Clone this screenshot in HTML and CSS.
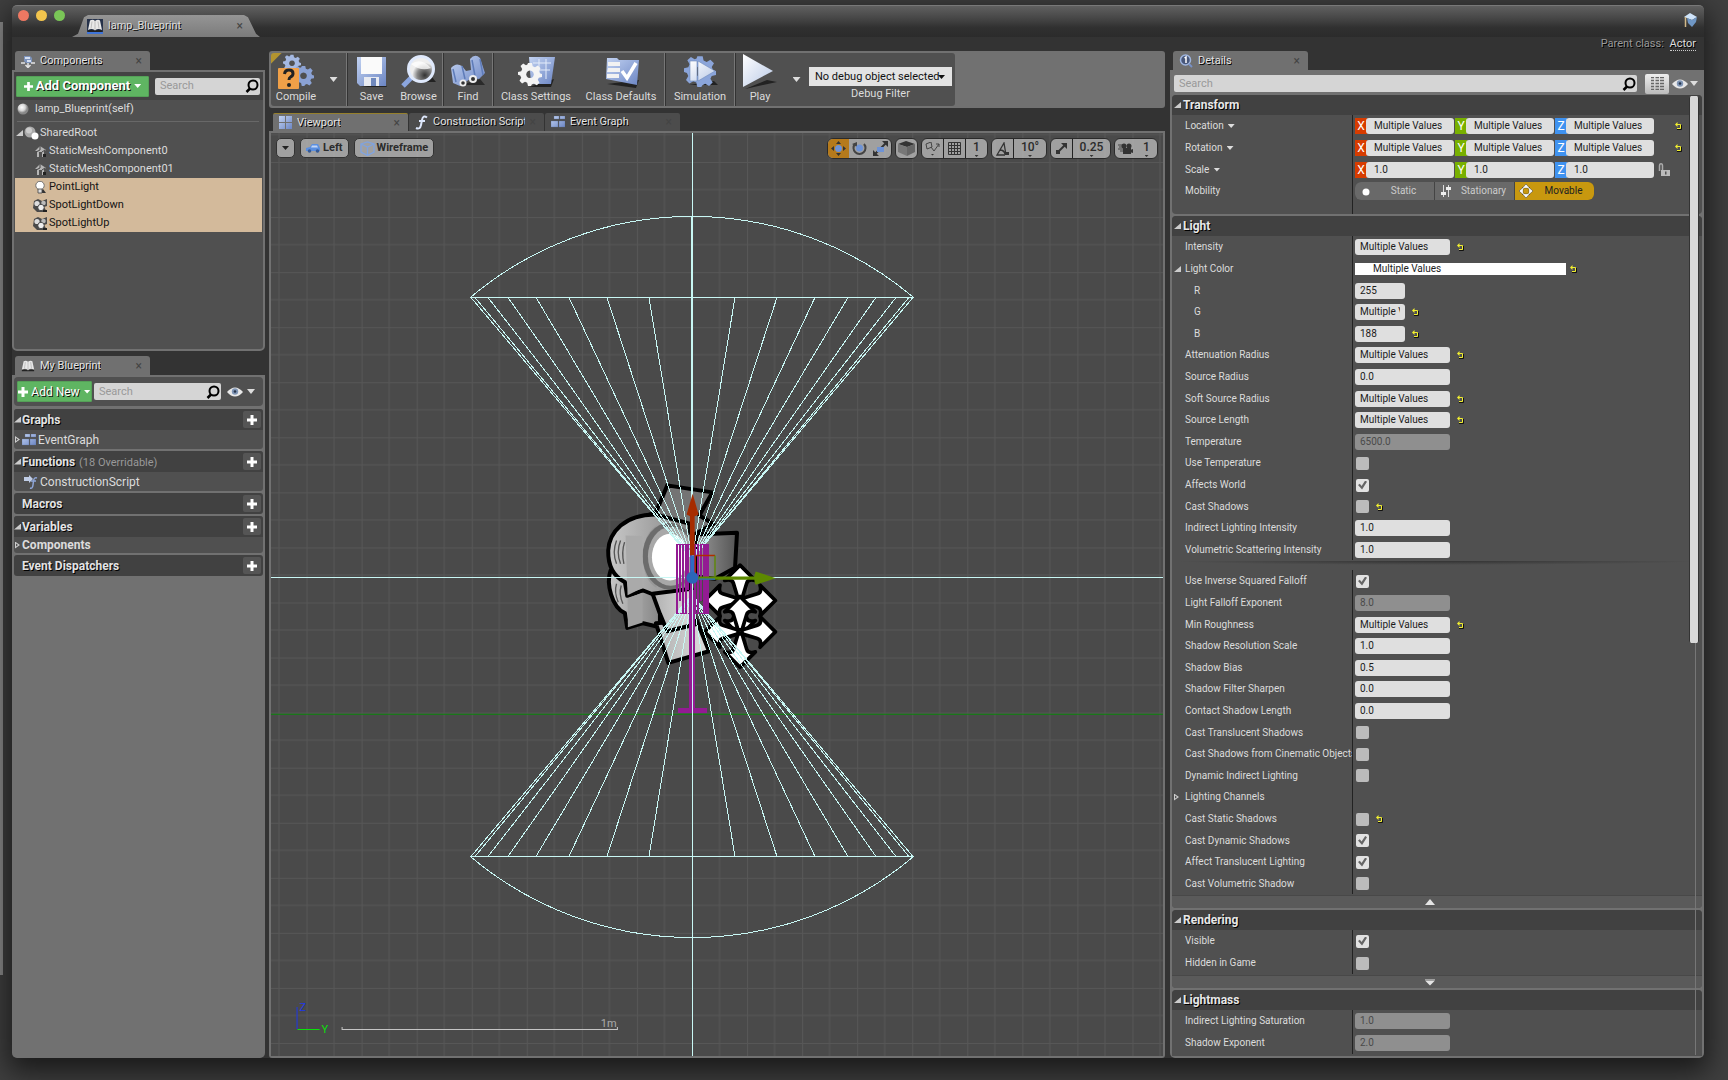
FILE: index.html
```html
<!DOCTYPE html>
<html lang="en">
<head>
<meta charset="utf-8">
<title>lamp_Blueprint</title>
<link rel="stylesheet" href="styles.css">
</head>
<body>
<svg class="defs" width="0" height="0" aria-hidden="true">
  <defs>
    <linearGradient id="blue" x1="0" y1="0" x2="1" y2="1"><stop offset="0" stop-color="#c3d3f2"/><stop offset="1" stop-color="#6c86c4"/></linearGradient>
    <linearGradient id="pale" x1="0" y1="0" x2="1" y2="1"><stop offset="0" stop-color="#fff"/><stop offset="1" stop-color="#b9c9e6"/></linearGradient>
    <radialGradient id="ball" cx=".4" cy=".35"><stop offset="0" stop-color="#fff"/><stop offset=".6" stop-color="#d8d8d8"/><stop offset="1" stop-color="#888"/></radialGradient>
    <radialGradient id="lens" cx=".65" cy=".75"><stop offset="0" stop-color="#333"/><stop offset=".6" stop-color="#888"/><stop offset="1" stop-color="#eee"/></radialGradient>
    <symbol id="i-search" viewBox="0 0 14 14"><circle cx="8" cy="6" r="4.5" fill="none" stroke="#000" stroke-width="2"/><path d="M5 9.500L1.500 13" stroke="#000" stroke-width="2.500"/></symbol>
    <symbol id="i-plus" viewBox="0 0 10 10"><path d="M5 0v10M0 5h10" stroke="#fff" stroke-width="3"/></symbol>
    <symbol id="i-eye" viewBox="0 0 16 10"><path d="M0 5Q8 -4 16 5Q8 14 0 5Z" fill="#e8e8e8"/><circle cx="8" cy="4.500" r="3.200" fill="#7f95b5"/><circle cx="8" cy="4.500" r="1.300" fill="#27364d"/></symbol>
    <symbol id="i-book" viewBox="0 0 16 14"><path d="M1 11L3 1.500Q6 0 8 2Q11 0 13 1.500L15 11Q11 9 8 11.500Q5 9 1 11Z" fill="#e8e8e8"/><path d="M8 2v9M5 2.500l-1 7M11 2.500l1 7" stroke="#aaa" stroke-width=".7"/><path d="M1 11.500Q5 10 8 12Q11 10 15 11.500V13H1Z" fill="#222"/></symbol>
    <symbol id="i-comp" viewBox="0 0 14 14"><path d="M3 2h6l2 2v5H5L3 7Z" fill="#7d93bb"/><path d="M4 3h5v2H4zM6 6h4v2H6z" fill="#d5dff0"/><path d="M0 9h4M10 9h4M7 9v4M4.500 11L7 13.500L9.500 11" stroke="#e4e4e4" stroke-width="1.500" fill="none"/></symbol>
    <symbol id="i-reset" viewBox="0 0 7 8"><path d="M2 7.500h4.500V3" stroke="#111" fill="none"/><path d="M2 6.500h3.500v-4H1" stroke="#f2f02e" fill="none"/><path d="M0 2.500L2.500 0v5Z" fill="#f2f02e"/></symbol>
    <symbol id="i-mesh" viewBox="0 0 13 13"><path d="M1 6L6 1L12 5L10 6V12H8V7H5V12H3V6Z" fill="#b5b5b5"/><path d="M6 1V5L2 7M8 7l3-2" stroke="#444" fill="none"/><path d="M9 9h3v3H9z" fill="#222"/></symbol>
    <symbol id="i-bulb" viewBox="0 0 13 13"><path d="M6 12h6L9 8Z" fill="#333"/><circle cx="6" cy="4.500" r="4.200" fill="#fff" stroke="#555" stroke-width=".8"/><path d="M4 8h4v4H4z" fill="#ddd" stroke="#444" stroke-width=".8"/></symbol>
    <symbol id="i-spot" viewBox="0 0 15 13"><path d="M1 2L5 0L9 2L14 0V7L11 8L14 13H4L0 9Z" fill="#4a4a4a"/><circle cx="4" cy="4.500" r="2.600" fill="#ddd"/><circle cx="10.500" cy="4" r="2.300" fill="#bbb"/><circle cx="8" cy="8.500" r="3.200" fill="#eee" stroke="#333" stroke-width=".8"/><path d="M10 11h4v2h-4z" fill="#222"/></symbol>
    <symbol id="i-gear" viewBox="0 0 24 24"><path d="M10 1h4l.7 3.200 2.300 1L19.800 3.500l2.700 2.700L20.800 9l1 2.300L24 12v3l-3.200.7-1 2.100 1.700 2.900-2.700 2.600-2.900-1.700-2.100 1L13 24h-3l-.8-3.300-2.200-1-2.900 1.700-2.600-2.700 1.700-2.900-1-2.300L0 12.700V10l3.200-.8 1-2.300L2.500 4 5.200 1.500 8 3.200l1.400-.6Z M12 8.500a3.800 3.800 0 1 0 .01 0Z" fill-rule="evenodd"/></symbol>
    <symbol id="i-blocks" viewBox="0 0 14 12"><path d="M3 0h5v3H3zM9 0h5v3H9zM0 5h7v6H0zM8 5h6v6H8z" fill="url(#blue)" stroke="#5b6f99" stroke-width=".3"/></symbol>
  </defs>
</svg>

<div class="window">
  <header class="titlebar">
    <div class="lights"><i class="red"></i><i class="yellow"></i><i class="green"></i></div>
    <div class="doc-tab">
      <svg width="16" height="15" viewBox="0 0 16 15"><path d="M0 0h16v13H0z" fill="#26324a"/><use href="#i-book" width="16" height="14"/><path d="M0 13h16v2H0z" fill="#3f74d8"/></svg><span>lamp_Blueprint</span><button class="x" aria-label="Close">×</button>
    </div>
    <svg class="tutorial" width="13" height="15" viewBox="0 0 13 15"><path d="M0 4L6 0L13 4L8 7Z" fill="#cfe4fa"/><path d="M3 5L8 7L13 4L12 9L8 14L4 10Z" fill="#6f96c4"/><path d="M1.500 4v10" stroke="#d2b98a" stroke-width="1.500"/></svg>
  </header>
  <div class="parent">Parent class: <a href="#">Actor</a></div>

  <div class="columns">
    <aside class="left">
      <div class="ptab"><svg width="14" height="14"><use href="#i-comp"/></svg><span>Components</span><button class="x" aria-label="Close">×</button></div>
      <section class="panel components">
        <div class="bar">
          <button class="add big"><svg width="9" height="9"><use href="#i-plus"/></svg>Add Component<i class="down"></i></button>
          <div class="search"><input type="text" placeholder="Search" aria-label="Search components"><svg width="14" height="14"><use href="#i-search"/></svg></div>
        </div>
        <div class="self"><svg width="12" height="12" viewBox="0 0 12 12"><circle cx="6" cy="6" r="5.500" fill="url(#ball)"/></svg>lamp_Blueprint(self)</div>
        <ul class="tree">
          <li class="root"><i class="open"></i><svg width="15" height="14" viewBox="0 0 15 14"><circle cx="6" cy="6" r="5.500" fill="#aaa"/><circle cx="5" cy="4.500" r="3" fill="#ccc"/><circle cx="11" cy="10" r="3.500" fill="#fff"/></svg>SharedRoot</li>
          <li><svg width="13" height="13"><use href="#i-mesh"/></svg>StaticMeshComponent0</li>
          <li><svg width="13" height="13"><use href="#i-mesh"/></svg>StaticMeshComponent01</li>
          <li class="sel"><svg width="13" height="13"><use href="#i-bulb"/></svg>PointLight</li>
          <li class="sel"><svg width="15" height="13"><use href="#i-spot"/></svg>SpotLightDown</li>
          <li class="sel"><svg width="15" height="13"><use href="#i-spot"/></svg>SpotLightUp</li>
        </ul>
      </section>

      <div class="ptab second"><svg width="14" height="14"><use href="#i-book"/></svg><span>My Blueprint</span><button class="x" aria-label="Close">×</button></div>
      <section class="panel blueprint">
        <div class="bar">
          <button class="add"><svg width="10" height="10"><use href="#i-plus"/></svg>Add New<i class="down"></i></button>
          <div class="search"><input type="text" placeholder="Search" aria-label="Search blueprint"><svg width="14" height="14"><use href="#i-search"/></svg></div>
          <button class="view" aria-label="View options"><svg width="16" height="10"><use href="#i-eye"/></svg><i class="down"></i></button>
        </div>
        <div class="cat">
          <h3><i class="open"></i>Graphs<button aria-label="Add graph"><svg width="10" height="10"><use href="#i-plus"/></svg></button></h3>
          <div class="item"><i class="shut"></i><svg width="14" height="12"><use href="#i-blocks"/></svg>EventGraph</div>
        </div>
        <div class="cat">
          <h3><i class="open"></i>Functions <small>(18 Overridable)</small><button aria-label="Add function"><svg width="10" height="10"><use href="#i-plus"/></svg></button></h3>
          <div class="item"><i class="none"></i><svg width="14" height="14" viewBox="0 0 14 14"><path d="M0 2h5V0l4 4-4 4V6H0Z" fill="#c0cde6"/><path d="M13 3q-3-1-3.500 3L9 10q-.5 4-3 3M7 6h5" stroke="#8ea5d6" stroke-width="1.500" fill="none"/></svg>ConstructionScript</div>
        </div>
        <div class="cat"><h3><i class="none"></i>Macros<button aria-label="Add macro"><svg width="10" height="10"><use href="#i-plus"/></svg></button></h3></div>
        <div class="cat">
          <h3><i class="open"></i>Variables<button aria-label="Add variable"><svg width="10" height="10"><use href="#i-plus"/></svg></button></h3>
          <div class="item sub"><i class="shut"></i>Components</div>
        </div>
        <div class="cat"><h3><i class="none"></i>Event Dispatchers<button aria-label="Add dispatcher"><svg width="10" height="10"><use href="#i-plus"/></svg></button></h3></div>
      </section>
    </aside>

    <main class="center">
      <div class="toolbar">
        <div class="tools">
          <button class="tool compile"><svg width="38" height="36" viewBox="0 0 38 36"><use href="#i-gear" x="6" y="0" width="18" height="18" fill="#a5b9e2"/><use href="#i-gear" x="16" y="11" width="21" height="21" fill="#8ba2d4"/><rect x="1" y="14" width="21" height="21" rx="1" fill="#f0a048"/><path d="M7.500 20q.5-4 4.500-4t4 3.500q0 2.500-2.500 3.500-1.500.8-1.500 3" stroke="#222" stroke-width="3" fill="none"/><circle cx="12" cy="31" r="2" fill="#222"/></svg>Compile</button>
          <button class="caret" aria-label="Compile options"><i class="down"></i></button>
          <i class="sep"></i>
          <button class="tool w47"><svg width="36" height="36" viewBox="0 0 36 36"><path d="M6 33h27l-2-3z" fill="#222"/><path d="M3 3h29v29H6l-3-3Z" fill="url(#blue)"/><path d="M7 3h21v17H7z" fill="#fafafa"/><path d="M10 23h15v9H10z" fill="#e8ebf2"/><path d="M17 24h5v8h-5z" fill="#7089bd"/></svg>Save</button>
          <button class="tool w47"><svg width="38" height="36" viewBox="0 0 38 36"><path d="M14 28h22l-4-5z" fill="#222"/><path d="M12 23L3 32" stroke="#8ba6df" stroke-width="5"/><circle cx="21" cy="15" r="12.500" fill="url(#lens)" stroke="#dfe9fc" stroke-width="3"/><path d="M11 10q10-7 20 4-10 4-20-4Z" fill="#fff" opacity=".75"/></svg>Browse</button>
          <i class="sep"></i>
          <button class="tool w48"><svg width="38" height="36" viewBox="0 0 38 36"><path d="M12 31h24l-5-6z" fill="#2a2a2a"/><path d="M2 14q5-6 11-2l4 5 5-1-1-11q5-6 10-1l5 15-6 6-7-1-5 3-7 5-7-3Z" fill="url(#blue)"/><path d="M4 15l3 13M13 12l3 13M23 6l3 16M31 5l3 16" stroke="#5e7bb8" stroke-width="1.500"/><circle cx="14" cy="29" r="3.500" fill="#eee"/><circle cx="24" cy="25" r="4" fill="#eee"/><circle cx="14" cy="29" r="1.800" fill="#333"/><circle cx="24" cy="25" r="2" fill="#333"/></svg>Find</button>
          <i class="sep"></i>
          <button class="tool w84"><svg width="38" height="36" viewBox="0 0 38 36"><path d="M12 33h22l3-8z" fill="#222"/><path d="M12 3h26l-4 27H14Z" fill="url(#blue)"/><path d="M16 9h18M15 16h18M22 5v15M29 5v20" stroke="#e4ecfa"/><use href="#i-gear" x="1" y="8" width="24" height="24" fill="#f4f4f4"/></svg>Class Settings</button>
          <button class="tool w86"><svg width="38" height="36" viewBox="0 0 38 36"><path d="M5 30l29 4 3-8z" fill="#222"/><path d="M5 4h10l2 2h20l-2 25L4 25Z" fill="url(#blue)"/><path d="M6 8h12v4H6zM6 14h12v4H5zM5 20h12v4H5z" fill="#f2f2f2"/><path d="M20 17l5 7L34 9" stroke="#fff" stroke-width="3.500" fill="none"/></svg>Class Defaults</button>
          <i class="sep"></i>
          <button class="tool w68"><svg width="38" height="36" viewBox="0 0 38 36"><path d="M8 31h29l-4-4z" fill="#222"/><use href="#i-gear" x="3" y="1" width="32" height="32" fill="#8ba5da"/><path d="M9 7h7v20H9zM17 7l17 10-17 10Z" fill="url(#pale)" stroke="#6f89bb" stroke-width=".6"/></svg>Simulation</button>
          <i class="sep"></i>
          <button class="tool w48"><svg width="38" height="36" viewBox="0 0 38 36"><path d="M4 35L36 28l-10-2z" fill="#222"/><path d="M2 0L32 17L2 33Z" fill="url(#pale)"/></svg>Play</button>
          <button class="caret" aria-label="Play options"><i class="down"></i></button>
          <div class="debug"><select aria-label="Debug Filter"><option>No debug object selected</option></select><i class="down"></i><span>Debug Filter</span></div>
        </div>
      </div>
      <nav class="tabs">
        <div class="ptab active"><svg width="13" height="13" viewBox="0 0 13 13"><path d="M0 0h6v6H0zM7 0h6v6H7zM0 7h6v6H0zM7 7h6v6H7z" fill="url(#blue)"/></svg><span>Viewport</span><button class="x" aria-label="Close">×</button></div>
        <div class="ptab"><svg width="13" height="15" viewBox="0 0 13 15"><path d="M12 2.500Q8-.5 7 5L6 10Q5 15 1 13M4 6h6" stroke="#dce6fa" stroke-width="2" fill="none"/></svg><span>Construction Script</span><button class="x" aria-label="Close">×</button></div>
        <div class="ptab"><svg width="14" height="12"><use href="#i-blocks"/></svg><span>Event Graph</span><button class="x" aria-label="Close">×</button></div>
      </nav>
      <section class="viewport">
        <svg class="scene" viewBox="271 133 892 922" preserveAspectRatio="xMidYMid slice">
          <defs>
            <pattern id="grid" x="692" y="217" width="55" height="55" patternUnits="userSpaceOnUse"><path d="M.5 0V55M27.500 0V55M0 .5H55M0 27.500H55" stroke="#575757"/></pattern>
            <linearGradient id="metal"><stop offset="0" stop-color="#c8c8c8"/><stop offset="1" stop-color="#858585"/></linearGradient>
            <linearGradient id="dark"><stop offset="0" stop-color="#989898"/><stop offset="1" stop-color="#545454"/></linearGradient>
            <linearGradient id="flap"><stop offset="0" stop-color="#b0b0b0"/><stop offset="1" stop-color="#dedede"/></linearGradient>
            <g id="fan"><path d="M0 0L-221-262M0 0L-217-262M0 0L-204-262M0 0L-184-262M0 0L-156-262M0 0L-123-262M0 0L-85-262M0 0L-43-262M0 0L43-262M0 0L85-262M0 0L123-262M0 0L156-262M0 0L184-262M0 0L204-262M0 0L217-262M0 0L221-262M-221-262H221M-221-262A343 343 0 0 1 221-262" fill="none" stroke="#c8f7f4"/></g>
            <path id="head" d="M0-106L46-60Q24-66 20-52L6-6H-6L-20-52Q-24-66-46-60Z"/>
            <g id="move"><use href="#head"/><use href="#head" transform="rotate(90)"/><use href="#head" transform="rotate(180)"/><use href="#head" transform="rotate(270)"/></g>
          </defs>
          <rect x="-500" y="-500" width="3000" height="3000" fill="#4a4a4a"/>
          <rect x="-500" y="-500" width="3000" height="3000" fill="url(#grid)"/>
          <path d="M-500 713.500H2500" stroke="#0b860b"/>
          <svg x="590" y="470" width="200" height="250" viewBox="0 0 600 750">
            <g stroke="#000" stroke-width="12" stroke-linejoin="round">
              <path d="M62 300C48 340 66 410 105 428L112 472L160 458L210 470V340Z" fill="url(#metal)"/>
              <path d="M198 458L320 450L357 542L235 577Z" fill="url(#flap)"/>
              <path d="M232 45L367 66L328 135L370 160L300 200L185 165L172 135L198 126Z" fill="#747474"/>
              <path d="M318 192L441 187L435 292L375 325L318 318Z" fill="url(#dark)"/>
              <path d="M195 132C105 132 58 185 55 240C54 285 72 318 105 335L112 376L160 360L190 372H300V160Z" fill="url(#metal)"/>
              <path d="M188 370L210 430L232 482L315 462L305 355Z" fill="url(#flap)"/>
            </g>
            <path d="M200 165Q160 190 160 260T200 352Z" fill="#999"/>
            <ellipse cx="238" cy="257" rx="80" ry="100" fill="#6c6c6c"/>
            <ellipse cx="242" cy="258" rx="68" ry="88" fill="#a8a8a8"/>
            <ellipse cx="240" cy="260" rx="54" ry="70" fill="#fff"/>
            <path d="M107 195L158 197V352L113 374Z" fill="#aaa"/><path d="M113 384L158 366V456L114 470Z" fill="#a2a2a2"/>
            <path d="M80 210q-14 35 0 70M92 210q-14 35 0 70M104 215q-10 30-2 65M80 340q-8 25 5 55M94 345q-8 25 5 55" fill="none" stroke="#555" stroke-width="4"/>
            <g fill="#fff" stroke="#000" stroke-width="11" stroke-linejoin="round"><use href="#move" x="450" y="390"/><use href="#move" x="450" y="484"/></g>
          </svg>
          <g shape-rendering="crispEdges">
            <path d="M-500 577.500H2500" stroke="#c8f7f4"/>
            <use href="#fan" x="692" y="559"/>
            <use href="#fan" transform="translate(692 594) scale(1 -1)"/>
            <path d="M692 217V500" stroke="#c8f7f4" stroke-width="2"/>
            <path d="M677 544V613M680 544V600M683 544V613M686 544V613M688 544V590M691 544V613M695 544V613M698 544V613M701 544V600M704 544V613M706 544V613M708 544V613" stroke="#931b93" stroke-width="2"/>
            <path d="M676 544.500H709M676 612.500H709" stroke="#931b93" stroke-dasharray="3 1"/>
            <path d="M692 590V710" stroke="#931b93" stroke-width="6"/>
            <path d="M678 709.500H707" stroke="#931b93" stroke-width="5"/>
            <path d="M692.500-500V2500" stroke="#c8f7f4"/>
          </g>
          <svg x="590" y="470" width="200" height="250" viewBox="0 0 600 750">
            <path d="M318 255H375" stroke="#b02c00" stroke-width="4"/><path d="M375 255V320" stroke="#5d8a00" stroke-width="4"/>
            <path d="M307 130V255" stroke="#a62c00" stroke-width="14"/><path d="M307 255V310" stroke="#2d6cc4" stroke-width="12"/><path d="M316 255V310" stroke="#a62c00" stroke-width="4"/>
            <path d="M308 70L326 132Q308 144 290 132Z" fill="#a62c00"/>
            <path d="M320 323H500" stroke="#5d8a00" stroke-width="10"/><path d="M326 326H375" stroke="#2d6cc4" stroke-width="4"/>
            <path d="M557 323L497 303Q488 323 497 343Z" fill="#5d8a00"/><circle cx="307" cy="322" r="18" fill="#2b67b8"/>
          </svg>
          <path d="M297.500 1006V1028" stroke="#1e37e8"/><path d="M298 1028.500H320" stroke="#0be00b"/>
          <text x="300" y="1010" class="mono" fill="#1e37e8">Z</text><text x="322" y="1032" class="mono" fill="#0be00b">Y</text>
          <path d="M342.500 1026V1028.500H617.500V1026" stroke="#c4c4c4" fill="none"/><text x="601" y="1026" class="mono" fill="#aaa">1m</text>
        </svg>
        <div class="vtools">
          <button class="pill sq" aria-label="Viewport options"><i class="down dark"></i></button>
          <button class="pill"><svg width="15" height="9" viewBox="0 0 15 9"><path d="M0 4L4 3L6 0H12L14 4V7H0Z" fill="#5b8fe0"/><circle cx="3.500" cy="7" r="1.800" fill="#355a96"/><circle cx="11.500" cy="7" r="1.800" fill="#355a96"/><path d="M6 1.500h5l1 2H5z" fill="#c2d6f7"/></svg>Left</button>
          <button class="pill"><svg width="15" height="15" viewBox="0 0 15 15"><path d="M1 3L7.500 1L14 3V11L7.500 14.500L1 11ZM1 3L7.500 6L14 3M7.500 6V14" fill="none" stroke="#7fa3e0" stroke-width="1.300"/></svg>Wireframe</button>
          <div class="seg first">
            <button class="on" aria-label="Move"><svg width="15" height="15" viewBox="0 0 15 15"><path d="M7.500 0L10 3H5ZM7.500 15L10 12H5ZM0 7.500L3 5v5ZM15 7.500L12 5v5Z" fill="#333"/><circle cx="7.500" cy="7.500" r="3.500" fill="#6e93d6"/></svg></button>
            <button aria-label="Rotate"><svg width="15" height="15" viewBox="0 0 15 15"><path d="M3 3A6 6 0 1 0 12 3" fill="none" stroke="#444" stroke-width="2"/><path d="M0 3l5-2v5z" fill="#444"/><circle cx="7.500" cy="7" r="3.500" fill="#6e93d6"/></svg></button>
            <button aria-label="Scale"><svg width="15" height="15" viewBox="0 0 15 15"><path d="M2 13L13 2" stroke="#333" stroke-width="2"/><path d="M15 0V6L9 0ZM0 15V9L6 15Z" fill="#333"/><path d="M4 6h7v5H4z" fill="#6e93d6"/></svg></button>
          </div>
          <div class="seg"><button aria-label="Coordinate space"><svg width="17" height="15" viewBox="0 0 17 15"><path d="M0 3L8 0L17 3L9 6Z" fill="#333"/><path d="M0 3L9 6V15L0 11Z" fill="#777"/><path d="M17 3V11L9 15V6Z" fill="#666"/></svg></button></div>
          <div class="seg"><button class="stack" aria-label="Surface snap"><svg width="15" height="11" viewBox="0 0 15 11"><path d="M1 2L6 0L7 5L2 7ZM6 5L9 9L14 2M11 2h3v3" fill="none" stroke="#444"/></svg><i></i></button><button class="line" aria-label="Grid snap"><svg width="13" height="13" viewBox="0 0 13 13"><path d="M.5.5h12v12H.5zM3.500 0v13M6.500 0v13M9.500 0v13M0 3.500h13M0 6.500h13M0 9.500h13" fill="none" stroke="#333"/></svg></button><button class="line stack">1<i></i></button></div>
          <div class="seg"><button aria-label="Angle snap"><svg width="13" height="14" viewBox="0 0 13 14"><path d="M9 13H1L8 1L10 13M4 8q4 0 5 4" fill="none" stroke="#333" stroke-width="1.300"/><path d="M9 10h4v3H9z" fill="#333"/></svg></button><button class="line stack w33">10°<i></i></button></div>
          <div class="seg"><button aria-label="Scale snap"><svg width="11" height="11" viewBox="0 0 11 11"><path d="M3 8L9 2" stroke="#333" stroke-width="2"/><path d="M11 0V6L5 0ZM0 7h4v4H0z" fill="#333"/></svg></button><button class="line stack w38">0.25<i></i></button></div>
          <div class="seg cam"><button aria-label="Camera speed"><svg width="15" height="12" viewBox="0 0 15 12"><path d="M0 2h6M1 4h5M0 6h6M2 8h5" stroke="#444"/><circle cx="6" cy="3" r="2.500" fill="#333"/><circle cx="11" cy="3" r="2.500" fill="#333"/><path d="M5 5h8v6H5zM12 7l3-1v4l-3-1z" fill="#333"/></svg></button><button class="stack">1<i></i></button></div>
        </div>
      </section>
    </main>

    <aside class="right">
      <div class="ptab"><svg width="14" height="14" viewBox="0 0 14 14"><circle cx="6.500" cy="6" r="5" fill="#48577a" stroke="#9fb5de" stroke-width="1.500"/><path d="M5.500 4L7 3v6" stroke="#fff" stroke-width="1.500" fill="none"/><path d="M10 10l3 3" stroke="#7891c6" stroke-width="2"/></svg><span>Details</span><button class="x" aria-label="Close">×</button></div>
      <section class="panel details">
        <div class="find">
          <div class="search"><input type="text" placeholder="Search" aria-label="Search details"><svg width="14" height="14"><use href="#i-search"/></svg></div>
          <button class="matrix" aria-label="Property matrix"><svg width="13" height="13" viewBox="0 0 13 13"><path d="M0 .5h13M0 3.500h13M0 6.500h13M0 9.500h13M0 12.500h13" stroke="#666" stroke-width="1.500" stroke-dasharray="3 1.500 3.500 1 4"/></svg></button>
          <button class="view" aria-label="View options"><svg width="16" height="10"><use href="#i-eye"/></svg><i class="down"></i></button>
        </div>
        <div class="scroll">
          <div class="sec">
            <h2><i class="open"></i>Transform</h2>
            <div class="rows transform">
              <div class="row"><label for="lx"><i class="slot"></i>Location<i class="down"></i></label><div class="vec"><span class="r">X</span><input id="lx" value="Multiple Values"><span class="g">Y</span><input aria-label="Location Y" value="Multiple Values"><span class="b">Z</span><input aria-label="Location Z" value="Multiple Values"><svg class="far" width="7" height="8"><use href="#i-reset"/></svg></div></div>
              <div class="row"><label for="rx"><i class="slot"></i>Rotation<i class="down"></i></label><div class="vec"><span class="r">X</span><input id="rx" value="Multiple Values"><span class="g">Y</span><input aria-label="Rotation Y" value="Multiple Values"><span class="b">Z</span><input aria-label="Rotation Z" value="Multiple Values"><svg class="far" width="7" height="8"><use href="#i-reset"/></svg></div></div>
              <div class="row"><label for="sx"><i class="slot"></i>Scale<i class="down"></i></label><div class="vec"><span class="r">X</span><input id="sx" value="1.0"><span class="g">Y</span><input aria-label="Scale Y" value="1.0"><span class="b">Z</span><input aria-label="Scale Z" value="1.0"><svg class="lock" width="12" height="14" viewBox="0 0 12 14"><path d="M1.500 8V3Q1.500.800 3 .800T4.500 3V7" fill="none" stroke="#aaa" stroke-width="1.500"/><path d="M3 7h9v6H3z" fill="#bbb"/><path d="M7 8.500h1.500v3H7z" fill="#555"/></svg></div></div>
              <div class="row"><span class="lab"><i class="slot"></i>Mobility</span><div class="mob"><button><svg width="14" height="14" viewBox="0 0 14 14"><circle cx="7" cy="8" r="3.500" fill="#fff"/></svg><span>Static</span></button><button><svg width="14" height="14" viewBox="0 0 14 14"><path d="M4.500 1v12M9.500 1v12" stroke="#ddd"/><path d="M2 8h5v3H2zM7 3h5v3H7z" fill="#eee"/></svg><span>Stationary</span></button><button class="on"><svg width="14" height="14" viewBox="0 0 14 14"><path d="M7 0l3.500 4h-7zM7 14l3.500-4h-7zM0 7l4-3.500v7zM14 7l-4-3.500v7z" fill="#fff" stroke="#333" stroke-width=".5"/><circle cx="7" cy="7" r="4" fill="none" stroke="#eee"/></svg><span>Movable</span></button></div></div>
            </div>
          </div>
          <div class="sec">
            <h2><i class="open"></i>Light</h2>
            <div class="rows">
              <div class="row"><label for="p1"><i class="slot"></i>Intensity</label><div class="val"><input id="p1" value="Multiple Values"><svg width="7" height="8"><use href="#i-reset"/></svg></div></div>
              <div class="row"><label for="p2"><i class="slot"><i class="open"></i></i>Light Color</label><div class="val color"><button id="p2">Multiple Values</button><svg width="7" height="8"><use href="#i-reset"/></svg></div></div>
              <div class="row child"><label for="p3"><i class="slot"></i>R</label><div class="val short"><input id="p3" value="255"></div></div>
              <div class="row child"><label for="p4"><i class="slot"></i>G</label><div class="val short"><input id="p4" value="Multiple Values"><svg width="7" height="8"><use href="#i-reset"/></svg></div></div>
              <div class="row child"><label for="p5"><i class="slot"></i>B</label><div class="val short"><input id="p5" value="188"><svg width="7" height="8"><use href="#i-reset"/></svg></div></div>
              <div class="row"><label for="p6"><i class="slot"></i>Attenuation Radius</label><div class="val"><input id="p6" value="Multiple Values"><svg width="7" height="8"><use href="#i-reset"/></svg></div></div>
              <div class="row"><label for="p7"><i class="slot"></i>Source Radius</label><div class="val"><input id="p7" value="0.0"></div></div>
              <div class="row"><label for="p8"><i class="slot"></i>Soft Source Radius</label><div class="val"><input id="p8" value="Multiple Values"><svg width="7" height="8"><use href="#i-reset"/></svg></div></div>
              <div class="row"><label for="p9"><i class="slot"></i>Source Length</label><div class="val"><input id="p9" value="Multiple Values"><svg width="7" height="8"><use href="#i-reset"/></svg></div></div>
              <div class="row"><label for="p10"><i class="slot"></i>Temperature</label><div class="val"><input id="p10" value="6500.0" disabled></div></div>
              <div class="row"><label for="p11"><i class="slot"></i>Use Temperature</label><div class="val"><input type="checkbox" id="p11"></div></div>
              <div class="row"><label for="p12"><i class="slot"></i>Affects World</label><div class="val"><input type="checkbox" id="p12" checked></div></div>
              <div class="row"><label for="p13"><i class="slot"></i>Cast Shadows</label><div class="val"><input type="checkbox" id="p13"><svg width="7" height="8"><use href="#i-reset"/></svg></div></div>
              <div class="row"><label for="p14"><i class="slot"></i>Indirect Lighting Intensity</label><div class="val"><input id="p14" value="1.0"></div></div>
              <div class="row"><label for="p15"><i class="slot"></i>Volumetric Scattering Intensity</label><div class="val"><input id="p15" value="1.0"></div></div>
            </div>
            <div class="split"></div>
            <div class="rows">
              <div class="row"><label for="q1"><i class="slot"></i>Use Inverse Squared Falloff</label><div class="val"><input type="checkbox" id="q1" checked></div></div>
              <div class="row"><label for="q2"><i class="slot"></i>Light Falloff Exponent</label><div class="val"><input id="q2" value="8.0" disabled></div></div>
              <div class="row"><label for="q3"><i class="slot"></i>Min Roughness</label><div class="val"><input id="q3" value="Multiple Values"><svg width="7" height="8"><use href="#i-reset"/></svg></div></div>
              <div class="row"><label for="q4"><i class="slot"></i>Shadow Resolution Scale</label><div class="val"><input id="q4" value="1.0"></div></div>
              <div class="row"><label for="q5"><i class="slot"></i>Shadow Bias</label><div class="val"><input id="q5" value="0.5"></div></div>
              <div class="row"><label for="q6"><i class="slot"></i>Shadow Filter Sharpen</label><div class="val"><input id="q6" value="0.0"></div></div>
              <div class="row"><label for="q7"><i class="slot"></i>Contact Shadow Length</label><div class="val"><input id="q7" value="0.0"></div></div>
              <div class="row"><label for="q8"><i class="slot"></i>Cast Translucent Shadows</label><div class="val"><input type="checkbox" id="q8"></div></div>
              <div class="row"><label for="q9"><i class="slot"></i>Cast Shadows from Cinematic Objects</label><div class="val"><input type="checkbox" id="q9"></div></div>
              <div class="row"><label for="q10"><i class="slot"></i>Dynamic Indirect Lighting</label><div class="val"><input type="checkbox" id="q10"></div></div>
              <div class="row"><span class="lab"><i class="slot"><i class="shut"></i></i>Lighting Channels</span></div>
              <div class="row"><label for="q12"><i class="slot"></i>Cast Static Shadows</label><div class="val"><input type="checkbox" id="q12"><svg width="7" height="8"><use href="#i-reset"/></svg></div></div>
              <div class="row"><label for="q13"><i class="slot"></i>Cast Dynamic Shadows</label><div class="val"><input type="checkbox" id="q13" checked></div></div>
              <div class="row"><label for="q14"><i class="slot"></i>Affect Translucent Lighting</label><div class="val"><input type="checkbox" id="q14" checked></div></div>
              <div class="row"><label for="q15"><i class="slot"></i>Cast Volumetric Shadow</label><div class="val"><input type="checkbox" id="q15"></div></div>
            </div>
            <button class="adv" aria-label="Hide advanced"><i class="up"></i></button>
          </div>
          <div class="sec">
            <h2><i class="open"></i>Rendering</h2>
            <div class="rows">
              <div class="row"><label for="s1"><i class="slot"></i>Visible</label><div class="val"><input type="checkbox" id="s1" checked></div></div>
              <div class="row"><label for="s2"><i class="slot"></i>Hidden in Game</label><div class="val"><input type="checkbox" id="s2"></div></div>
            </div>
            <button class="adv" aria-label="Show advanced"><i class="more"></i></button>
          </div>
          <div class="sec last">
            <h2><i class="open"></i>Lightmass</h2>
            <div class="rows">
              <div class="row"><label for="t1"><i class="slot"></i>Indirect Lighting Saturation</label><div class="val"><input id="t1" value="1.0" disabled></div></div>
              <div class="row"><label for="t2"><i class="slot"></i>Shadow Exponent</label><div class="val"><input id="t2" value="2.0" disabled></div></div>
            </div>
          </div>
          <div class="track"><div class="thumb"></div></div>
        </div>
      </section>
    </aside>
  </div>
</div>
</body>
</html>
```

FILE: styles.css
```css
* { box-sizing: border-box; }
body {
  margin: 0; height: 100vh; overflow: hidden;
  padding: 5px 24px 22px 12px;
  font: 11px/16px Roboto, "Liberation Sans", sans-serif;
  color: #dcdcdc;
  background: linear-gradient(#888, #888) 0 22px / 3px calc(100% - 127px) no-repeat, #3f3f3f;
}
button, input, select { font: inherit; color: inherit; margin: 0; padding: 0; border: 0; background: none; }
button { display: flex; align-items: center; justify-content: center; white-space: nowrap; }
svg { flex: none; display: block; }
.defs { position: absolute; }
ul { list-style: none; margin: 0; padding: 0; }
h2, h3 { margin: 0; }
i { flex: none; display: block; font-style: normal; }

.down { width: 7px; height: 4px; background: #ddd; clip-path: polygon(0 0, 100% 0, 50% 100%); }
.down.dark { background: #222; }
.up { width: 10px; height: 6px; background: #e4e4e4; clip-path: polygon(0 100%, 50% 0, 100% 100%); }
.more { width: 10px; height: 7px; background: #e4e4e4; clip-path: polygon(0 0, 100% 0, 100% 15%, 0 15%, 0 30%, 100% 30%, 50% 100%, 0 30%); }
.open { width: 7px; height: 6px; background: #ccc; clip-path: polygon(100% 0, 100% 100%, 0 100%); }
.shut { width: 5px; height: 7px; background: #ccc; clip-path: polygon(0 0, 100% 50%, 0 100%, 0 0, 1px 2px, 1px 5px, 3px 50%, 1px 2px); }
.none { width: 7px; }

.window {
  height: 100%; display: flex; flex-direction: column;
  background: #333; border-radius: 5px;
  box-shadow: 0 10px 28px 4px rgba(0, 0, 0, .6);
}
.titlebar {
  display: flex; align-items: flex-end; height: 32px; flex: none; position: relative;
  border-top: 1px solid #787878; border-radius: 5px 5px 0 0;
  background: linear-gradient(#606060, #464646 40%, #303030 70%, #2b2b2b);
}
.lights { display: flex; gap: 7px; padding: 0 0 16px 6px; width: 60px; }
.lights i { width: 11px; height: 11px; border-radius: 50%; }
.red { background: #ee7862; } .yellow { background: #f2c44d; } .green { background: #7ac657; }
.doc-tab {
  display: flex; align-items: center; gap: 5px; width: 188px; height: 22px; padding: 0 17px 0 15px;
  background: linear-gradient(#959595, #7b7b7b);
  clip-path: polygon(0 100%, 6px 85%, 12px 10%, 16px 0, 172px 0, 176px 10%, 184px 85%, 100% 100%);
  text-shadow: 1px 1px #111;
}
.x { margin-left: auto; color: #444; font-size: 12px; line-height: 12px; }
.tutorial { margin: 0 7px 9px auto; }
.parent { height: 14px; flex: none; padding-right: 8px; text-align: right; line-height: 14px; color: #999; text-shadow: 1px 1px #000; }
.parent a { color: #ddd; text-decoration: none; border-bottom: 1px dotted #ccc; margin-left: 3px; }

.columns { flex: 1; min-height: 0; display: grid; grid-template-columns: 253px minmax(0, 1fr) 534px; gap: 4px; }
.left, .center, .right { display: flex; flex-direction: column; min-height: 0; min-width: 0; }
.center { margin-right: 1px; }

.ptab {
  display: flex; align-items: center; flex: none; gap: 5px; width: 135px; height: 19px; margin-left: 3px; padding: 0 8px 0 6px;
  background: #707070; border-radius: 3px 3px 0 0; text-shadow: 1px 1px #000; color: #e4e4e4;
}
.ptab span { overflow: hidden; white-space: nowrap; }
.ptab .x { text-shadow: none; }
.left .second { margin-top: 5px; }
.panel { background: #717171; border-radius: 0 0 5px 5px; padding: 2px; }

.add { height: 21px; gap: 3px; padding: 0 4px; background: #5fb562; color: #fff; font-size: 12px; text-shadow: 1px 1px #111; border: 1px solid #55a058; border-radius: 1px; }
.add .down { background: #fff; margin-left: 1px; }
.add.big { width: 133px; font-size: 13px; font-weight: 700; }
.search { display: flex; align-items: center; flex: 1; min-width: 0; height: 17px; background: #d5d5d5; border-radius: 2px; padding: 0 1px 0 5px; }
.search input { flex: 1; min-width: 0; color: #222; outline: 0; }
.search input::placeholder { color: #999; opacity: 1; }

.components { height: 281px; flex: none; background: #505050; border: 2px solid #717171; padding: 0; }
.components .bar { display: flex; align-items: center; gap: 6px; height: 28px; padding: 0 3px 0 2px; background: #434343; }
.self { display: flex; align-items: center; gap: 6px; height: 22px; margin: 0 4px 0 3px; padding-bottom: 4px; border-bottom: 1px solid #686868; }
.self svg { width: 12px; }
.tree { padding-top: 2px; margin: 0 1px; }
.tree li { display: flex; align-items: center; gap: 1px; height: 18px; padding-left: 18px; }
.tree li.root { padding-left: 1px; }
.tree svg { width: 15px; }
.tree .sel { background: #d3ba9b; color: #141414; }

.blueprint { flex: 1; display: flex; flex-direction: column; gap: 2px; min-height: 0; }
.blueprint .bar { display: flex; align-items: center; gap: 2px; height: 29px; margin-bottom: 1px; padding: 0 8px 0 3px; background: #505050; border-radius: 4px; }
.blueprint .add { width: 75px; }
.blueprint .view { margin-left: 4px; }
.view { gap: 4px; }
.view .down { width: 8px; height: 5px; }
.cat { background: #505050; border-radius: 3px; overflow: hidden; }
.cat h3 { display: flex; align-items: center; height: 21px; gap: 1px; background: #414141; font-size: 12px; text-shadow: 1px 1px #000; padding-right: 2px; color: #e4e4e4; }
.cat small { font-size: 11px; font-weight: 400; color: #999; text-shadow: none; padding: 2px 0 0 3px; }
.cat h3 button { width: 18px; height: 17px; margin-left: auto; background: #555; border-radius: 2px; }
.item { display: flex; align-items: center; gap: 2px; height: 19px; padding-left: 1px; font-size: 12px; }
.item.sub { font-weight: 700; height: 16px; }

.toolbar { height: 57px; flex: none; background: #717171; padding: 2px; border-radius: 3px; }
.tools { display: flex; width: 684px; height: 53px; background: linear-gradient(135deg, #b3942f 7px, #505050 8px); border-radius: 3px; text-shadow: 1px 1px #000; }
.tool { flex-direction: column; justify-content: flex-start; width: 50px; line-height: 14px; padding-top: 1px; }
.w47 { width: 47px; } .w48 { width: 48px; } .w68 { width: 68px; } .w84 { width: 84px; } .w86 { width: 86px; }
.caret { width: 25px; }
.caret .down { width: 8px; height: 5px; }
.sep { width: 2px; background: #777; border-right: 1px solid #333; }
.debug { position: relative; width: 143px; margin-top: 14px; text-align: center; text-shadow: none; }
.debug select { display: block; appearance: none; width: 100%; height: 19px; padding-left: 6px; background: #e3e3e3; color: #111; }
.debug .down { position: absolute; right: 7px; top: 8px; background: #111; }

.tabs { display: flex; gap: 1px; height: 23px; flex: none; padding-left: 4px; align-items: flex-end; }
.tabs .ptab { background: #4c4c4c; margin: 0; height: 18px; border-radius: 2px 2px 0 0; }
.tabs .active { background: #707070; border-top: 1px solid #96802c; }
.viewport { flex: 1; min-height: 0; position: relative; border: 2px solid #717171; border-radius: 0 0 3px 3px; overflow: hidden; }
.scene { position: absolute; inset: 0; width: 100%; height: 100%; }
.mono { font: 11px Roboto, sans-serif; }
.vtools { position: relative; display: flex; gap: 3px; padding: 5px 5px 0; color: #2b2b2b; font-weight: 700; }
.pill { height: 20px; gap: 2px; margin-right: 2px; padding: 0 5px; background: rgba(190, 190, 190, .75); border: 1px solid #333; border-radius: 5px; }
.pill.sq { width: 19px; padding: 0; }
.seg { display: flex; height: 21px; background: rgba(190, 190, 190, .75); border: 1px solid #2b2b2b; border-radius: 6px; overflow: hidden; font-size: 12px; font-weight: 500; }
.seg.first { margin-left: auto; }
.seg button { width: 21px; }
.seg .on { background: #b57a1c; }
.seg .line { border-left: 1px solid #222; width: 22px; }
.seg .w33 { width: 33px; } .seg .w38 { width: 38px; }
.stack { flex-direction: column; line-height: 14px; gap: 1px; }
.stack i { width: 4px; height: 2px; background: #333; clip-path: polygon(0 0, 100% 0, 50% 100%); }
.cam { width: 44px; justify-content: space-around; }

.details { flex: 1; min-height: 0; display: flex; flex-direction: column; font-size: 10px; }
.find { display: flex; align-items: center; height: 23px; flex: none; padding: 0 4px 0 2px; font-size: 11px; }
.matrix { width: 24px; height: 20px; margin-left: 8px; background: linear-gradient(#eee, #bbb); border-radius: 2px; }
.find .view { margin-left: 3px; gap: 2px; }
.scroll { flex: 1; min-height: 0; overflow: hidden; position: relative; display: flex; flex-direction: column; gap: 2px; }
.sec { flex: none; background: #505050; border-radius: 4px; overflow: hidden; }
.sec.last { flex: 1; border-radius: 4px 4px 0 0; }
.sec h2 { display: flex; align-items: center; gap: 2px; height: 20px; padding-left: 2px; background: #414141; font-size: 12px; text-shadow: 1px 1px #000; color: #e8e8e8; }
.rows { display: grid; grid-auto-rows: 22px 22px 21px 22px 21px; background: linear-gradient(#222, #222) 180px 0 / 1px 100% no-repeat; }
.transform { padding-bottom: 12px; }
.row { display: grid; grid-template-columns: 180px 1fr; align-items: center; }
.row label, .row .lab { display: flex; align-items: center; white-space: nowrap; overflow: hidden; padding-left: 2px; }
.row label .down { margin-left: 4px; }
.slot { width: 11px; }
.child .slot { width: 20px; }
.val, .vec { display: flex; align-items: center; padding-left: 3px; }
.val svg { margin-left: 7px; }
.row input:not([type=checkbox]) { width: 95px; height: 16px; padding: 0 5px; color: #1c1c1c; background: #dfdfdf; border-radius: 3px; }
.row .short input:not([type=checkbox]) { width: 50px; }
.row input:disabled { background: #8f8f8f; color: #4a4a4a; }
.row input[type=checkbox] { appearance: none; width: 13px; height: 13px; margin-left: 1px; background: #bbb; border-radius: 2px; }
.row input[type=checkbox]:checked { background: #e2e2e2; }
.row input[type=checkbox]:checked::before { content: ""; display: block; width: 9px; height: 9px; margin: 2px; background: #666; clip-path: polygon(0 50%, 20% 35%, 40% 60%, 80% 0, 100% 15%, 45% 100%); }
.color button { width: 211px; height: 12px; justify-content: flex-start; padding-left: 18px; line-height: 12px; color: #222; background: #fff; }
.color svg { margin-left: 4px; }
.vec span { width: 12px; height: 16px; line-height: 16px; text-align: center; color: #fff; font-size: 12px; }
.vec .r { background: #d73c00; } .vec .g { background: #78b000; } .vec .b { background: #3f92f0; }
.row .vec input:not([type=checkbox]) { width: 88px; margin: 0 1px 0 -1px; padding-left: 8px; }
.vec .far { margin-left: 20px; }
.vec .lock { margin-left: 3px; }
.mob { display: flex; gap: 1px; margin-left: 3px; width: 239px; height: 18px; border-radius: 6px; overflow: hidden; background: #444; }
.mob button { flex: 1; background: #696969; padding-left: 4px; justify-content: flex-start; color: #ccc; }
.mob button span { flex: 1; text-align: center; }
.mob .on { background: #c8980f; color: #222; }
.split { height: 10px; background: radial-gradient(ellipse at 50% 0, #333, transparent 70%) 0 1px / 100% 4px no-repeat; }
.adv { width: 100%; height: 13px; margin-top: 1px; padding-right: 14px; background: #5a5a5a; border-top: 1px solid #484848; }
.track { position: absolute; top: 1px; bottom: 1px; right: 3px; width: 9px; background: linear-gradient(#777, #777) 5px 0 / 1px 100% no-repeat; }
.thumb { height: 57%; background: #d8d8d8; border: 1px solid #333; border-width: 0 1px; width: 10px; margin-left: -1px; border-radius: 2px; }
```
